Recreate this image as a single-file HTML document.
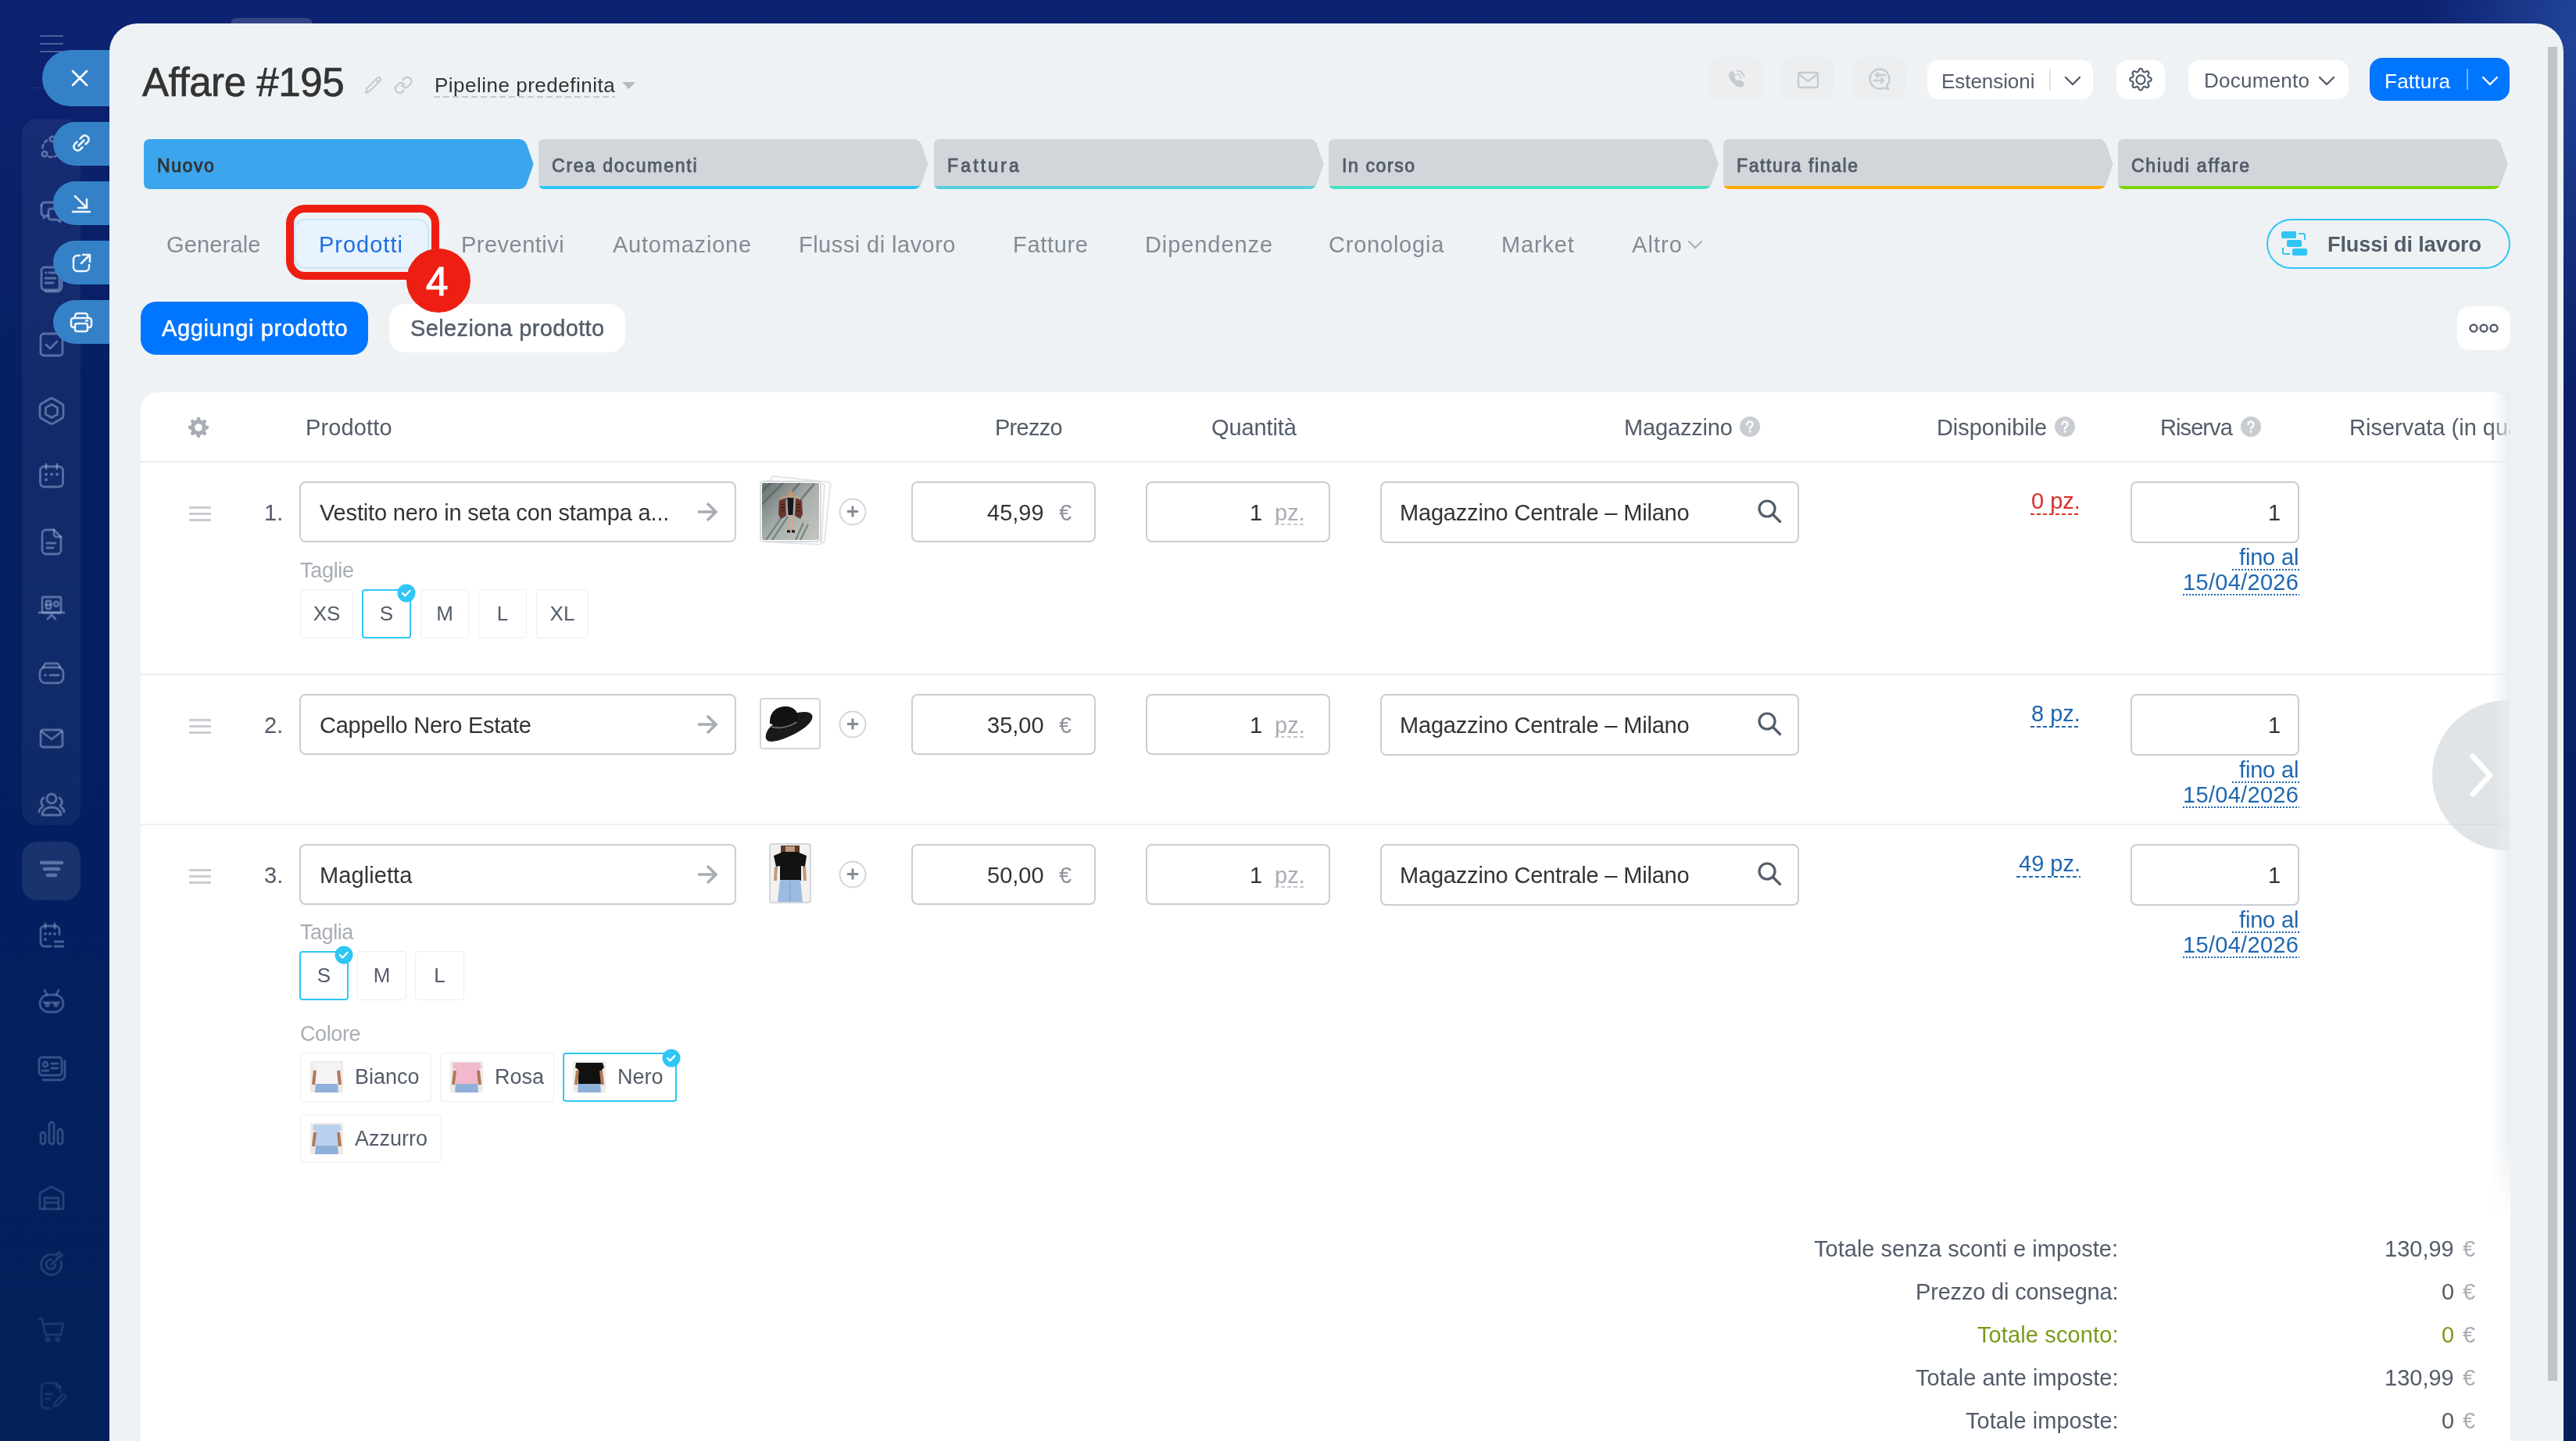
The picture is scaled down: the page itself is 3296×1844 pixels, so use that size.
<!DOCTYPE html>
<html><head><meta charset="utf-8"><style>
html,body{margin:0;padding:0;width:3296px;height:1844px;overflow:hidden;}
body{position:relative;font-family:"Liberation Sans",sans-serif;}
.a{position:absolute;}
.t{white-space:nowrap;will-change:transform;}
</style></head><body>
<div class="a" style="left:0px;top:0px;width:3296px;height:1844px;background:linear-gradient(180deg,#0d2271 0%,#0a2068 25%,#04205c 100%);"></div>
<div class="a" style="left:3100px;top:0px;width:196px;height:500px;background:radial-gradient(ellipse at 100% 10%,rgba(60,110,200,.45),rgba(60,110,200,0) 70%);"></div>
<div class="a" style="left:0px;top:0px;width:140px;height:1844px;background:linear-gradient(180deg,#0d2271 0%,#061f62 30%,#041f60 60%,#03215a 100%);"></div>
<div class="a" style="left:51px;top:45px;width:30px;height:2px;background:rgba(255,255,255,.28);border-radius:1px;"></div>
<div class="a" style="left:51px;top:55px;width:30px;height:2px;background:rgba(255,255,255,.28);border-radius:1px;"></div>
<div class="a" style="left:51px;top:65px;width:30px;height:2px;background:rgba(255,255,255,.28);border-radius:1px;"></div>
<div class="a" style="left:40px;top:112px;width:100px;height:1px;background:rgba(255,255,255,.08);"></div>
<div class="a" style="left:28px;top:152px;width:75px;height:904px;background:rgba(255,255,255,.05);border-radius:20px;"></div>
<div class="a" style="left:28px;top:1077px;width:75px;height:75px;background:rgba(255,255,255,.09);border-radius:20px;"></div>
<div class="a" style="left:295px;top:23px;width:105px;height:11px;background:rgba(255,255,255,.16);border-radius:8px 8px 0 0;"></div>
<svg class="a" style="left:47px;top:170px;" width="38" height="38" viewBox="0 0 38 38"><g fill="none" stroke="rgba(170,185,225,.48)" stroke-width="2.8" stroke-linecap="round" stroke-linejoin="round" opacity="1"><circle cx="20" cy="8" r="3.2"/><circle cx="10" cy="27" r="3.2"/><path d="M13 9.5A13 13 0 0 0 7.5 21" stroke-dasharray="4 3.5"/><path d="M15.5 30.5A13 13 0 0 0 29 26" stroke-dasharray="4 3.5"/></g></svg>
<svg class="a" style="left:47px;top:253px;" width="38" height="38" viewBox="0 0 38 38"><g fill="none" stroke="rgba(170,185,225,.48)" stroke-width="2.8" stroke-linecap="round" stroke-linejoin="round" opacity="1"><path d="M6 10a4 4 0 0 1 4-4h14a4 4 0 0 1 4 4v3"/><path d="M6 10v9a4 4 0 0 0 3 4v3l3-3h2"/><path d="M15 17a3 3 0 0 1 3-3h13a3 3 0 0 1 3 3v8a3 3 0 0 1-3 3h-1v3l-4-3h-8a3 3 0 0 1-3-3z"/></g></svg>
<svg class="a" style="left:47px;top:338px;" width="38" height="38" viewBox="0 0 38 38"><g fill="none" stroke="rgba(170,185,225,.48)" stroke-width="2.8" stroke-linecap="round" stroke-linejoin="round" opacity="1"><rect x="6" y="4" width="23" height="29" rx="4"/><path d="M32 9v20a6 6 0 0 1-6 6H11"/><circle cx="12" cy="11" r="1.6" fill="rgba(170,185,225,.48)" stroke="none"/><path d="M16 11h8M11 18h13M11 24h10"/></g></svg>
<svg class="a" style="left:47px;top:422px;" width="38" height="38" viewBox="0 0 38 38"><g fill="none" stroke="rgba(170,185,225,.48)" stroke-width="2.8" stroke-linecap="round" stroke-linejoin="round" opacity="1"><rect x="5" y="5" width="28" height="28" rx="4"/><path d="M12 19l5 5 9-9"/></g></svg>
<svg class="a" style="left:47px;top:507px;" width="38" height="38" viewBox="0 0 38 38"><g fill="none" stroke="rgba(170,185,225,.48)" stroke-width="2.8" stroke-linecap="round" stroke-linejoin="round" opacity="1"><path d="M16.5 3.5a5 5 0 0 1 5 0l10 5.8a5 5 0 0 1 2.5 4.3v10.8a5 5 0 0 1-2.5 4.3l-10 5.8a5 5 0 0 1-5 0l-10-5.8A5 5 0 0 1 4 24.4V13.6a5 5 0 0 1 2.5-4.3z"/><path d="M19 10.5l7.5 4.3v8.4L19 27.5l-7.5-4.3v-8.4z"/></g></svg>
<svg class="a" style="left:47px;top:590px;" width="38" height="38" viewBox="0 0 38 38"><g fill="none" stroke="rgba(170,185,225,.48)" stroke-width="2.8" stroke-linecap="round" stroke-linejoin="round" opacity="1"><rect x="4.5" y="7" width="29" height="26" rx="5"/><path d="M12 4v6M26 4v6"/><g fill="rgba(170,185,225,.48)" stroke="none"><circle cx="12" cy="17" r="2"/><circle cx="19" cy="17" r="2"/><circle cx="26" cy="17" r="2"/><circle cx="12" cy="24" r="2"/></g></g></svg>
<svg class="a" style="left:47px;top:675px;" width="38" height="38" viewBox="0 0 38 38"><g fill="none" stroke="rgba(170,185,225,.48)" stroke-width="2.8" stroke-linecap="round" stroke-linejoin="round" opacity="1"><path d="M11 3h11l9 9v17a5 5 0 0 1-5 5H12a5 5 0 0 1-5-5V8a5 5 0 0 1 4-5z"/><path d="M22 3v6a3 3 0 0 0 3 3h6M13 20h11M13 26h8"/></g></svg>
<svg class="a" style="left:47px;top:760px;" width="38" height="38" viewBox="0 0 38 38"><g fill="none" stroke="rgba(170,185,225,.48)" stroke-width="2.8" stroke-linecap="round" stroke-linejoin="round" opacity="1"><rect x="7" y="4" width="24" height="20" rx="2"/><path d="M3 24h32M19 27l-5 5M19 27l5 5"/><rect x="12" y="9" width="6" height="10" rx="1"/><path d="M12 14h6"/><circle cx="25" cy="13" r="3"/></g></svg>
<svg class="a" style="left:47px;top:842px;" width="38" height="38" viewBox="0 0 38 38"><g fill="none" stroke="rgba(170,185,225,.48)" stroke-width="2.8" stroke-linecap="round" stroke-linejoin="round" opacity="1"><path d="M8 12l3-5h16l3 5"/><rect x="4" y="12" width="30" height="20" rx="7"/><circle cx="11" cy="22" r="1.8" fill="rgba(170,185,225,.48)" stroke="none"/><path d="M17 22h11"/></g></svg>
<svg class="a" style="left:47px;top:926px;" width="38" height="38" viewBox="0 0 38 38"><g fill="none" stroke="rgba(170,185,225,.48)" stroke-width="2.8" stroke-linecap="round" stroke-linejoin="round" opacity="1"><rect x="5" y="8" width="28" height="22" rx="3"/><path d="M6 10l13 10 13-10"/></g></svg>
<svg class="a" style="left:47px;top:1011px;" width="38" height="38" viewBox="0 0 38 38"><g fill="none" stroke="rgba(170,185,225,.48)" stroke-width="2.8" stroke-linecap="round" stroke-linejoin="round" opacity="1"><circle cx="19" cy="11" r="6"/><path d="M7 32c0-6 5-10 12-10s12 4 12 10z"/><path d="M8 20a6 6 0 0 1 1-10M30 20a6 6 0 0 0-1-10M3 28c0-3 2-5 4-6M35 28c0-3-2-5-4-6"/></g></svg>
<svg class="a" style="left:47px;top:1095px;" width="38" height="38" viewBox="0 0 38 38"><g fill="none" stroke="rgba(170,185,225,.48)" stroke-width="2.8" stroke-linecap="round" stroke-linejoin="round" opacity="1"><path d="M6 9h26M10 17h18M14 25h10" stroke-width="4.5"/></g></svg>
<svg class="a" style="left:47px;top:1179px;" width="38" height="38" viewBox="0 0 38 38"><g fill="none" stroke="rgba(170,185,225,.48)" stroke-width="2.8" stroke-linecap="round" stroke-linejoin="round" opacity="0.85"><path d="M29 17V11a5 5 0 0 0-5-5H10a5 5 0 0 0-5 5v16a5 5 0 0 0 5 5h8"/><path d="M11 3v6M23 3v6"/><g fill="rgba(170,185,225,.48)" stroke="none"><circle cx="11" cy="16" r="2"/><circle cx="17" cy="16" r="2"/><circle cx="23" cy="16" r="2"/><circle cx="11" cy="23" r="2"/></g><path d="M23 26h11M23 32h11"/></g></svg>
<svg class="a" style="left:47px;top:1263px;" width="38" height="38" viewBox="0 0 38 38"><g fill="none" stroke="rgba(170,185,225,.48)" stroke-width="2.8" stroke-linecap="round" stroke-linejoin="round" opacity="0.75"><path d="M10 4l3 6M28 4l-3 6"/><rect x="4" y="10" width="30" height="22" rx="11"/><path d="M9 20h20"/><circle cx="13.5" cy="23" r="1.6"/><circle cx="24.5" cy="23" r="1.6"/></g></svg>
<svg class="a" style="left:47px;top:1347px;" width="38" height="38" viewBox="0 0 38 38"><g fill="none" stroke="rgba(170,185,225,.48)" stroke-width="2.8" stroke-linecap="round" stroke-linejoin="round" opacity="0.68"><rect x="3" y="6" width="29" height="23" rx="4"/><path d="M36 11v18a6 6 0 0 1-6 6H8"/><circle cx="11" cy="15" r="3"/><path d="M7 23h8M19 14h8M19 20h8"/></g></svg>
<svg class="a" style="left:47px;top:1431px;" width="38" height="38" viewBox="0 0 38 38"><g fill="none" stroke="rgba(170,185,225,.48)" stroke-width="2.8" stroke-linecap="round" stroke-linejoin="round" opacity="0.6"><rect x="5" y="18" width="6" height="15" rx="3"/><rect x="16" y="5" width="6" height="28" rx="3"/><rect x="27" y="14" width="6" height="19" rx="3"/></g></svg>
<svg class="a" style="left:47px;top:1515px;" width="38" height="38" viewBox="0 0 38 38"><g fill="none" stroke="rgba(170,185,225,.48)" stroke-width="2.8" stroke-linecap="round" stroke-linejoin="round" opacity="0.45"><path d="M4 14a4 4 0 0 1 2-3.5l11-6a4 4 0 0 1 4 0l11 6a4 4 0 0 1 2 3.5V32H4z"/><path d="M10 32V18h18v14M10 24h18"/></g></svg>
<svg class="a" style="left:47px;top:1599px;" width="38" height="38" viewBox="0 0 38 38"><g fill="none" stroke="rgba(170,185,225,.48)" stroke-width="2.8" stroke-linecap="round" stroke-linejoin="round" opacity="0.4"><path d="M31 15a13 13 0 1 1-8-8"/><path d="M24 19a6 6 0 1 1-5-6"/><path d="M19 19l10-10M26 6l1 3 3 1 3-3-3-1-1-3z"/></g></svg>
<svg class="a" style="left:47px;top:1683px;" width="38" height="38" viewBox="0 0 38 38"><g fill="none" stroke="rgba(170,185,225,.48)" stroke-width="2.8" stroke-linecap="round" stroke-linejoin="round" opacity="0.32"><path d="M3 5h4l4 20h20l3-14H9"/><circle cx="14" cy="31" r="2.2"/><circle cx="27" cy="31" r="2.2"/></g></svg>
<svg class="a" style="left:47px;top:1767px;" width="38" height="38" viewBox="0 0 38 38"><g fill="none" stroke="rgba(170,185,225,.48)" stroke-width="2.8" stroke-linecap="round" stroke-linejoin="round" opacity="0.26"><path d="M30 14V8l-5-5H11a5 5 0 0 0-5 5v22a5 5 0 0 0 5 5h6"/><path d="M25 3v5h5M12 17h8M12 23h5"/><path d="M22 33l2-6 9-9a2.5 2.5 0 0 1 3.5 3.5l-9 9z"/></g></svg>
<div class="a" style="left:54px;top:64px;width:126px;height:72px;background:#3581c8;border-radius:36px;"></div>
<svg class="a" style="left:84px;top:82px;" width="36" height="36" viewBox="0 0 36 36"><path d="M9 9l18 18M27 9L9 27" stroke="#fff" stroke-width="2.6" stroke-linecap="round"/></svg>
<div class="a" style="left:68px;top:156px;width:112px;height:56px;background:#3581c8;border-radius:28px;"></div>
<div class="a" style="left:68px;top:232px;width:112px;height:56px;background:#3581c8;border-radius:28px;"></div>
<div class="a" style="left:68px;top:308px;width:112px;height:56px;background:#3581c8;border-radius:28px;"></div>
<div class="a" style="left:68px;top:384px;width:112px;height:56px;background:#3581c8;border-radius:28px;"></div>
<svg class="a" style="left:86px;top:165px;" width="36" height="36" viewBox="0 0 36 36"><g fill="none" stroke="#f2f6fb" stroke-width="2.5" stroke-linecap="round" stroke-linejoin="round"><path d="M14.5 21.5l7-7"/><path d="M12.5 16.5l-3 3a5 5 0 0 0 7 7l3-3"/><path d="M23.5 19.5l3-3a5 5 0 0 0-7-7l-3 3"/></g></svg>
<svg class="a" style="left:86px;top:242px;" width="36" height="36" viewBox="0 0 36 36"><g fill="none" stroke="#f2f6fb" stroke-width="2.5" stroke-linecap="round" stroke-linejoin="round"><path d="M10 9l15 15M25 13v11H14M7 29h22"/></g></svg>
<svg class="a" style="left:86px;top:318px;" width="36" height="36" viewBox="0 0 36 36"><g fill="none" stroke="#f2f6fb" stroke-width="2.5" stroke-linecap="round" stroke-linejoin="round"><path d="M16 9h-3a5 5 0 0 0-5 5v10a5 5 0 0 0 5 5h10a5 5 0 0 0 5-5v-3"/><path d="M20 8h9v9M29 8l-11 11"/></g></svg>
<svg class="a" style="left:86px;top:394px;" width="36" height="36" viewBox="0 0 36 36"><g fill="none" stroke="#f2f6fb" stroke-width="2.5" stroke-linecap="round" stroke-linejoin="round"><path d="M10 13V10a3 3 0 0 1 3-3h10a3 3 0 0 1 3 3v3"/><path d="M10 25H8a3 3 0 0 1-3-3v-6a3 3 0 0 1 3-3h20a3 3 0 0 1 3 3v6a3 3 0 0 1-3 3h-2"/><rect x="10" y="20" width="16" height="10" rx="2.5"/><path d="M24 16.5h2"/></g></svg>
<div class="a" style="left:140px;top:30px;width:3140px;height:1870px;background:#eef2f4;border-radius:36px 36px 0 0;"></div>
<div class="a" style="left:3260px;top:60px;width:12px;height:1707px;background:#c1c4c6;"></div>
<div class="a t" style="left:181.5px;top:79.7px;font-size:51px;line-height:51px;color:#333;font-weight:400;letter-spacing:-0.42px;-webkit-text-stroke:0.7px #333;">Affare #195</div>
<svg class="a" style="left:464px;top:95px;" width="28" height="28" viewBox="0 0 28 28"><g fill="none" stroke="#c4c9ce" stroke-width="2" stroke-linejoin="round"><path d="M4 24l1.5-6L19 4.5a2.5 2.5 0 0 1 3.5 3.5L9 21.5z"/><path d="M17 7l4 4"/></g></svg>
<svg class="a" style="left:503px;top:94px;" width="30" height="30" viewBox="0 0 30 30"><g fill="none" stroke="#c4c9ce" stroke-width="2.2" stroke-linecap="round"><path d="M14.5 14.5l-1.3-1.3a4.3 4.3 0 0 0-6.1 0l-3.2 3.2a4.3 4.3 0 0 0 0 6.1l1.2 1.2a4.3 4.3 0 0 0 6.1 0l2.2-2.2"/><path d="M11.3 15.5l1.3 1.3a4.3 4.3 0 0 0 6.1 0l3.6-3.6a4.3 4.3 0 0 0 0-6.1l-1.2-1.2a4.3 4.3 0 0 0-6.1 0l-2 2"/></g></svg>
<div class="a t" style="left:556.0px;top:96.3px;font-size:26px;line-height:26px;color:#333;font-weight:400;letter-spacing:0.50px;">Pipeline predefinita</div>
<div class="a" style="left:555px;top:123px;width:232px;height:2px;background:repeating-linear-gradient(90deg,#c4c9ce 0 8px,transparent 8px 12px);"></div>
<svg class="a" style="left:796px;top:105px;" width="17" height="10" viewBox="0 0 17 10"><path d="M0 0h17L8.5 9z" fill="#b5bac0"/></svg>
<div class="a" style="left:2187px;top:74px;width:67px;height:54px;background:#eceef0;border-radius:14px;box-shadow:0 0 2px rgba(0,0,0,.03);"></div>
<div class="a" style="left:2279px;top:74px;width:67px;height:54px;background:#eceef0;border-radius:14px;box-shadow:0 0 2px rgba(0,0,0,.03);"></div>
<div class="a" style="left:2372px;top:74px;width:66px;height:54px;background:#eceef0;border-radius:14px;box-shadow:0 0 2px rgba(0,0,0,.03);"></div>
<svg class="a" style="left:2204px;top:84px;" width="34" height="34" viewBox="0 0 34 34"><g fill="none" stroke="#c6cbd0" stroke-width="2.4" stroke-linecap="round" stroke-linejoin="round"><path d="M10 9c1.5-1.5 3-1 4 .5l1.5 2.5c.8 1.5 0 2.5-1 3.3 1 2.5 2.8 4.3 5.2 5.3 1-1 2-1.7 3.3-1l2.5 1.5c1.5 1 2 2.5.5 4-2.5 2.5-7 1.8-12-3.2S7.5 11.5 10 9z" fill="#c6cbd0" stroke-width="1.6"/><path d="M19 6.5a9 9 0 0 1 8.5 8.5" stroke-width="1.8" stroke-dasharray="9 2 4"/><path d="M18.5 11a4.5 4.5 0 0 1 4.5 4.5" stroke-width="1.8"/></g></svg>
<svg class="a" style="left:2296px;top:84px;" width="34" height="34" viewBox="0 0 34 34"><g fill="none" stroke="#c6cbd0" stroke-width="2.4" stroke-linecap="round" stroke-linejoin="round"><rect x="5" y="9" width="25" height="19" rx="2"/><path d="M6 11l11.5 9L29 11"/></g></svg>
<svg class="a" style="left:2388px;top:84px;" width="34" height="34" viewBox="0 0 34 34"><g fill="none" stroke="#c6cbd0" stroke-width="2.4" stroke-linecap="round" stroke-linejoin="round"><path d="M17 4.5a12.5 12.5 0 1 0 5.5 23.8l5.5 1.7-1.7-4.8A12.5 12.5 0 0 0 17 4.5z"/><path d="M24 12H12M15 9l-3 3 3 3M10 19h12M19 16l3 3-3 3"/></g></svg>
<div class="a" style="left:2466px;top:77px;width:212px;height:50px;background:#fff;border-radius:14px;"></div>
<div class="a t" style="left:2484.0px;top:91.1px;font-size:26px;line-height:26px;color:#535c69;font-weight:400;letter-spacing:-0.06px;">Estensioni</div>
<div class="a" style="left:2622px;top:88px;width:2px;height:28px;background:#e3e5e8;"></div>
<svg class="a" style="left:2640px;top:96px;" width="24" height="14" viewBox="0 0 24 14"><path d="M3 3l9 9 9-9" fill="none" stroke="#535c69" stroke-width="2.4" stroke-linecap="round" stroke-linejoin="round"/></svg>
<div class="a" style="left:2708px;top:77px;width:62px;height:50px;background:#fff;border-radius:14px;"></div>
<svg class="a" style="left:2721px;top:84px;" width="36" height="36" viewBox="0 0 36 36"><g fill="none" stroke="#535c69" stroke-width="2.2" stroke-linejoin="round"><path d="M18.00 3.90L18.36 3.92L18.71 3.97L19.06 4.08L19.40 4.26L19.72 4.55L20.00 4.97L20.24 5.53L20.44 6.14L20.62 6.69L20.81 7.13L21.01 7.45L21.23 7.67L21.46 7.84L21.70 7.97L21.94 8.08L22.19 8.18L22.46 8.25L22.74 8.30L23.05 8.29L23.42 8.21L23.86 8.04L24.38 7.77L24.95 7.48L25.51 7.26L26.01 7.16L26.44 7.18L26.81 7.29L27.13 7.46L27.42 7.67L27.69 7.91L27.93 8.18L28.14 8.47L28.31 8.79L28.42 9.16L28.44 9.59L28.34 10.09L28.12 10.65L27.83 11.22L27.56 11.74L27.39 12.18L27.31 12.55L27.30 12.86L27.35 13.14L27.42 13.41L27.52 13.66L27.63 13.90L27.76 14.14L27.93 14.37L28.15 14.59L28.47 14.79L28.91 14.98L29.46 15.16L30.07 15.36L30.63 15.60L31.05 15.88L31.34 16.20L31.52 16.54L31.63 16.89L31.68 17.24L31.70 17.60L31.68 17.96L31.63 18.31L31.52 18.66L31.34 19.00L31.05 19.32L30.63 19.60L30.07 19.84L29.46 20.04L28.91 20.22L28.47 20.41L28.15 20.61L27.93 20.83L27.76 21.06L27.63 21.30L27.52 21.54L27.42 21.79L27.35 22.06L27.30 22.34L27.31 22.65L27.39 23.02L27.56 23.46L27.83 23.98L28.12 24.55L28.34 25.11L28.44 25.61L28.42 26.04L28.31 26.41L28.14 26.73L27.93 27.02L27.69 27.29L27.42 27.53L27.13 27.74L26.81 27.91L26.44 28.02L26.01 28.04L25.51 27.94L24.95 27.72L24.38 27.43L23.86 27.16L23.42 26.99L23.05 26.91L22.74 26.90L22.46 26.95L22.19 27.02L21.94 27.12L21.70 27.23L21.46 27.36L21.23 27.53L21.01 27.75L20.81 28.07L20.62 28.51L20.44 29.06L20.24 29.67L20.00 30.23L19.72 30.65L19.40 30.94L19.06 31.12L18.71 31.23L18.36 31.28L18.00 31.30L17.64 31.28L17.29 31.23L16.94 31.12L16.60 30.94L16.28 30.65L16.00 30.23L15.76 29.67L15.56 29.06L15.38 28.51L15.19 28.07L14.99 27.75L14.77 27.53L14.54 27.36L14.30 27.23L14.06 27.12L13.81 27.02L13.54 26.95L13.26 26.90L12.95 26.91L12.58 26.99L12.14 27.16L11.62 27.43L11.05 27.72L10.49 27.94L9.99 28.04L9.56 28.02L9.19 27.91L8.87 27.74L8.58 27.53L8.31 27.29L8.07 27.02L7.86 26.73L7.69 26.41L7.58 26.04L7.56 25.61L7.66 25.11L7.88 24.55L8.17 23.98L8.44 23.46L8.61 23.02L8.69 22.65L8.70 22.34L8.65 22.06L8.58 21.79L8.48 21.54L8.37 21.30L8.24 21.06L8.07 20.83L7.85 20.61L7.53 20.41L7.09 20.22L6.54 20.04L5.93 19.84L5.37 19.60L4.95 19.32L4.66 19.00L4.48 18.66L4.37 18.31L4.32 17.96L4.30 17.60L4.32 17.24L4.37 16.89L4.48 16.54L4.66 16.20L4.95 15.88L5.37 15.60L5.93 15.36L6.54 15.16L7.09 14.98L7.53 14.79L7.85 14.59L8.07 14.37L8.24 14.14L8.37 13.90L8.48 13.66L8.58 13.41L8.65 13.14L8.70 12.86L8.69 12.55L8.61 12.18L8.44 11.74L8.17 11.22L7.88 10.65L7.66 10.09L7.56 9.59L7.58 9.16L7.69 8.79L7.86 8.47L8.07 8.18L8.31 7.91L8.58 7.67L8.87 7.46L9.19 7.29L9.56 7.18L9.99 7.16L10.49 7.26L11.05 7.48L11.62 7.77L12.14 8.04L12.58 8.21L12.95 8.29L13.26 8.30L13.54 8.25L13.81 8.18L14.06 8.08L14.30 7.97L14.54 7.84L14.77 7.67L14.99 7.45L15.19 7.13L15.38 6.69L15.56 6.14L15.76 5.53L16.00 4.97L16.28 4.55L16.60 4.26L16.94 4.08L17.29 3.97L17.64 3.92Z"/><circle cx="18" cy="18" r="5.6"/></g></svg>
<div class="a" style="left:2800px;top:77px;width:205px;height:50px;background:#fff;border-radius:14px;"></div>
<div class="a t" style="left:2819.6px;top:89.9px;font-size:26px;line-height:26px;color:#535c69;font-weight:400;letter-spacing:0.25px;">Documento</div>
<svg class="a" style="left:2965px;top:96px;" width="24" height="14" viewBox="0 0 24 14"><path d="M3 3l9 9 9-9" fill="none" stroke="#535c69" stroke-width="2.4" stroke-linecap="round" stroke-linejoin="round"/></svg>
<div class="a" style="left:3032px;top:74px;width:179px;height:55px;background:#0075ff;border-radius:16px;"></div>
<div class="a t" style="left:3051.0px;top:90.9px;font-size:26px;line-height:26px;color:#fff;font-weight:400;letter-spacing:0.25px;">Fattura</div>
<div class="a" style="left:3156px;top:88px;width:2px;height:27px;background:rgba(255,255,255,.45);"></div>
<svg class="a" style="left:3174px;top:96px;" width="24" height="14" viewBox="0 0 24 14"><path d="M3 3l9 9 9-9" fill="none" stroke="#fff" stroke-width="2.4" stroke-linecap="round" stroke-linejoin="round"/></svg>
<svg class="a" style="left:184px;top:178px;" width="499" height="64" viewBox="0 0 499 64"><defs><clipPath id="sc0"><path d="M8 0H480Q487 0 490 7L498 30Q499 32 498 34L490 57Q487 64 480 64H8Q0 64 0 56V8Q0 0 8 0Z"/></clipPath></defs><path d="M8 0H480Q487 0 490 7L498 30Q499 32 498 34L490 57Q487 64 480 64H8Q0 64 0 56V8Q0 0 8 0Z" fill="#3ba6ee"/></svg>
<div class="a t" style="left:201.0px;top:200.8px;font-size:23px;line-height:23px;color:#333;font-weight:400;letter-spacing:1.57px;-webkit-text-stroke:0.9px #333;">Nuovo</div>
<svg class="a" style="left:689px;top:178px;" width="499" height="64" viewBox="0 0 499 64"><defs><clipPath id="sc1"><path d="M8 0H480Q487 0 490 7L498 30Q499 32 498 34L490 57Q487 64 480 64H8Q0 64 0 56V8Q0 0 8 0Z"/></clipPath></defs><path d="M8 0H480Q487 0 490 7L498 30Q499 32 498 34L490 57Q487 64 480 64H8Q0 64 0 56V8Q0 0 8 0Z" fill="#d2d6db"/><rect x="0" y="60" width="499" height="4" fill="#2fc6f6" clip-path="url(#sc1)"/></svg>
<div class="a t" style="left:706.0px;top:200.8px;font-size:23px;line-height:23px;color:#535c69;font-weight:400;letter-spacing:1.79px;-webkit-text-stroke:0.9px #535c69;">Crea documenti</div>
<svg class="a" style="left:1195px;top:178px;" width="499" height="64" viewBox="0 0 499 64"><defs><clipPath id="sc2"><path d="M8 0H480Q487 0 490 7L498 30Q499 32 498 34L490 57Q487 64 480 64H8Q0 64 0 56V8Q0 0 8 0Z"/></clipPath></defs><path d="M8 0H480Q487 0 490 7L498 30Q499 32 498 34L490 57Q487 64 480 64H8Q0 64 0 56V8Q0 0 8 0Z" fill="#d2d6db"/><rect x="0" y="60" width="499" height="4" fill="#55d0e0" clip-path="url(#sc2)"/></svg>
<div class="a t" style="left:1212.0px;top:200.8px;font-size:23px;line-height:23px;color:#535c69;font-weight:400;letter-spacing:3.17px;-webkit-text-stroke:0.9px #535c69;">Fattura</div>
<svg class="a" style="left:1700px;top:178px;" width="499" height="64" viewBox="0 0 499 64"><defs><clipPath id="sc3"><path d="M8 0H480Q487 0 490 7L498 30Q499 32 498 34L490 57Q487 64 480 64H8Q0 64 0 56V8Q0 0 8 0Z"/></clipPath></defs><path d="M8 0H480Q487 0 490 7L498 30Q499 32 498 34L490 57Q487 64 480 64H8Q0 64 0 56V8Q0 0 8 0Z" fill="#d2d6db"/><rect x="0" y="60" width="499" height="4" fill="#47dfbf" clip-path="url(#sc3)"/></svg>
<div class="a t" style="left:1717.0px;top:200.8px;font-size:23px;line-height:23px;color:#535c69;font-weight:400;letter-spacing:1.61px;-webkit-text-stroke:0.9px #535c69;">In corso</div>
<svg class="a" style="left:2205px;top:178px;" width="499" height="64" viewBox="0 0 499 64"><defs><clipPath id="sc4"><path d="M8 0H480Q487 0 490 7L498 30Q499 32 498 34L490 57Q487 64 480 64H8Q0 64 0 56V8Q0 0 8 0Z"/></clipPath></defs><path d="M8 0H480Q487 0 490 7L498 30Q499 32 498 34L490 57Q487 64 480 64H8Q0 64 0 56V8Q0 0 8 0Z" fill="#d2d6db"/><rect x="0" y="60" width="499" height="4" fill="#ffa900" clip-path="url(#sc4)"/></svg>
<div class="a t" style="left:2222.0px;top:200.8px;font-size:23px;line-height:23px;color:#535c69;font-weight:400;letter-spacing:1.60px;-webkit-text-stroke:0.9px #535c69;">Fattura finale</div>
<svg class="a" style="left:2710px;top:178px;" width="499" height="64" viewBox="0 0 499 64"><defs><clipPath id="sc5"><path d="M8 0H480Q487 0 490 7L498 30Q499 32 498 34L490 57Q487 64 480 64H8Q0 64 0 56V8Q0 0 8 0Z"/></clipPath></defs><path d="M8 0H480Q487 0 490 7L498 30Q499 32 498 34L490 57Q487 64 480 64H8Q0 64 0 56V8Q0 0 8 0Z" fill="#d2d6db"/><rect x="0" y="60" width="499" height="4" fill="#7bd500" clip-path="url(#sc5)"/></svg>
<div class="a t" style="left:2727.0px;top:200.8px;font-size:23px;line-height:23px;color:#535c69;font-weight:400;letter-spacing:1.75px;-webkit-text-stroke:0.9px #535c69;">Chiudi affare</div>
<div class="a" style="left:376px;top:280px;width:173px;height:64px;background:#e8f3fd;border:2px solid #cde3f7;border-radius:14px;box-sizing:border-box;"></div>
<div class="a t" style="left:213.0px;top:299.4px;font-size:29px;line-height:29px;color:#828b95;font-weight:400;letter-spacing:0.16px;">Generale</div>
<div class="a t" style="left:408.0px;top:299.4px;font-size:29px;line-height:29px;color:#1f6fe0;font-weight:400;letter-spacing:0.99px;">Prodotti</div>
<div class="a t" style="left:590.0px;top:299.4px;font-size:29px;line-height:29px;color:#828b95;font-weight:400;letter-spacing:0.49px;">Preventivi</div>
<div class="a t" style="left:784.0px;top:299.4px;font-size:29px;line-height:29px;color:#828b95;font-weight:400;letter-spacing:0.78px;">Automazione</div>
<div class="a t" style="left:1022.0px;top:299.4px;font-size:29px;line-height:29px;color:#828b95;font-weight:400;letter-spacing:0.47px;">Flussi di lavoro</div>
<div class="a t" style="left:1296.0px;top:299.4px;font-size:29px;line-height:29px;color:#828b95;font-weight:400;letter-spacing:0.67px;">Fatture</div>
<div class="a t" style="left:1465.0px;top:299.4px;font-size:29px;line-height:29px;color:#828b95;font-weight:400;letter-spacing:0.92px;">Dipendenze</div>
<div class="a t" style="left:1700.0px;top:299.4px;font-size:29px;line-height:29px;color:#828b95;font-weight:400;letter-spacing:0.78px;">Cronologia</div>
<div class="a t" style="left:1921.0px;top:299.4px;font-size:29px;line-height:29px;color:#828b95;font-weight:400;letter-spacing:0.85px;">Market</div>
<div class="a t" style="left:2088.0px;top:299.4px;font-size:29px;line-height:29px;color:#828b95;font-weight:400;letter-spacing:1.06px;">Altro</div>
<svg class="a" style="left:2158px;top:306px;" width="22" height="14" viewBox="0 0 22 14"><path d="M3 3l8 8 8-8" fill="none" stroke="#a8adb4" stroke-width="2" stroke-linecap="round"/></svg>
<div class="a" style="left:2900px;top:280px;width:312px;height:64px;border:2px solid #2fc6f6;border-radius:32px;box-sizing:border-box;"></div>
<svg class="a" style="left:2918px;top:295px;" width="36" height="34" viewBox="0 0 36 34"><g fill="#2fc6f6"><rect x="1" y="1" width="19" height="9" rx="2"/><rect x="8" y="12" width="19" height="9" rx="2"/><rect x="15" y="23" width="19" height="9" rx="2"/></g><g fill="none" stroke="#2fc6f6" stroke-width="2"><path d="M23 4h6a2 2 0 0 1 2 2v6M12 30H5a2 2 0 0 1-2-2v-6"/></g></svg>
<div class="a t" style="left:2978.0px;top:299.7px;font-size:27px;line-height:27px;color:#535c69;font-weight:700;letter-spacing:-0.07px;">Flussi di lavoro</div>
<div class="a" style="left:180px;top:386px;width:291px;height:68px;background:#0075ff;border-radius:20px;"></div>
<div class="a t" style="left:207.0px;top:405.7px;font-size:29px;line-height:29px;color:#fff;font-weight:400;letter-spacing:0.64px;-webkit-text-stroke:0.5px #fff;">Aggiungi prodotto</div>
<div class="a" style="left:498px;top:389px;width:302px;height:62px;background:#fff;border-radius:20px;"></div>
<div class="a t" style="left:525.0px;top:405.7px;font-size:29px;line-height:29px;color:#535c69;font-weight:400;letter-spacing:0.37px;-webkit-text-stroke:0.4px #535c69;">Seleziona prodotto</div>
<div class="a" style="left:3144px;top:392px;width:68px;height:56px;background:#fff;border-radius:16px;"></div>
<svg class="a" style="left:3154px;top:410px;" width="48" height="20" viewBox="0 0 48 20"><g fill="none" stroke="#535c69" stroke-width="2.4"><circle cx="11" cy="10" r="4.5"/><circle cx="24" cy="10" r="4.5"/><circle cx="37" cy="10" r="4.5"/></g></svg>
<div class="a" style="left:366px;top:262px;width:196px;height:96px;border:10px solid #ee1f12;border-radius:24px;box-sizing:border-box;"></div>
<div class="a" style="left:520px;top:318px;width:82px;height:82px;background:#ee1f12;border-radius:50%;"></div>
<div class="a t" style="left:545px;top:335.4px;font-size:51px;line-height:51px;color:#fff;font-weight:400;-webkit-text-stroke:1.2px #fff;">4</div>
<div class="a" style="left:180px;top:502px;width:3032px;height:1398px;background:#fff;border-radius:22px 22px 0 0;"></div>
<svg class="a" style="left:239px;top:532px;" width="30" height="30" viewBox="0 0 30 30"><g fill="#a8adb4"><rect x="12.6" y="1.8" width="4.8" height="9" rx="2.4" transform="rotate(0 15 15)"/><rect x="12.6" y="1.8" width="4.8" height="9" rx="2.4" transform="rotate(45 15 15)"/><rect x="12.6" y="1.8" width="4.8" height="9" rx="2.4" transform="rotate(90 15 15)"/><rect x="12.6" y="1.8" width="4.8" height="9" rx="2.4" transform="rotate(135 15 15)"/><rect x="12.6" y="1.8" width="4.8" height="9" rx="2.4" transform="rotate(180 15 15)"/><rect x="12.6" y="1.8" width="4.8" height="9" rx="2.4" transform="rotate(225 15 15)"/><rect x="12.6" y="1.8" width="4.8" height="9" rx="2.4" transform="rotate(270 15 15)"/><rect x="12.6" y="1.8" width="4.8" height="9" rx="2.4" transform="rotate(315 15 15)"/><circle cx="15" cy="15" r="10"/></g><circle cx="15" cy="15" r="4.8" fill="#fff"/></svg>
<div class="a t" style="left:391.0px;top:533.1px;font-size:29px;line-height:29px;color:#535c69;font-weight:400;letter-spacing:0.14px;">Prodotto</div>
<div class="a t" style="left:1272.7px;top:533.1px;font-size:29px;line-height:29px;color:#535c69;font-weight:400;letter-spacing:-0.75px;">Prezzo</div>
<div class="a t" style="left:1550.0px;top:533.1px;font-size:29px;line-height:29px;color:#535c69;font-weight:400;letter-spacing:-0.11px;">Quantità</div>
<div class="a t" style="left:2078.0px;top:533.1px;font-size:29px;line-height:29px;color:#535c69;font-weight:400;letter-spacing:-0.16px;">Magazzino</div>
<div class="a t" style="left:2478.0px;top:533.1px;font-size:29px;line-height:29px;color:#535c69;font-weight:400;letter-spacing:-0.07px;">Disponibile</div>
<div class="a t" style="left:2764.0px;top:533.1px;font-size:29px;line-height:29px;color:#535c69;font-weight:400;letter-spacing:-0.92px;">Riserva</div>
<div class="a" style="left:3006px;top:0;width:206px;height:1844px;overflow:hidden;pointer-events:none">
<div class="a t" style="left:0px;top:533.1px;font-size:29px;line-height:29px;color:#535c69;font-weight:400;white-space:nowrap;">Riservata (in quantità)</div>
</div>
<svg class="a" style="left:2226px;top:533px;" width="26" height="26" viewBox="0 0 26 26"><circle cx="13" cy="13" r="13" fill="#c9cdd2"/><path d="M9.5 10a3.5 3.5 0 1 1 5.5 2.8c-1.2.8-2 1.4-2 2.7" fill="none" stroke="#fff" stroke-width="2.4" stroke-linecap="round"/><circle cx="13" cy="19.3" r="1.5" fill="#fff"/></svg>
<svg class="a" style="left:2629px;top:533px;" width="26" height="26" viewBox="0 0 26 26"><circle cx="13" cy="13" r="13" fill="#c9cdd2"/><path d="M9.5 10a3.5 3.5 0 1 1 5.5 2.8c-1.2.8-2 1.4-2 2.7" fill="none" stroke="#fff" stroke-width="2.4" stroke-linecap="round"/><circle cx="13" cy="19.3" r="1.5" fill="#fff"/></svg>
<svg class="a" style="left:2867px;top:533px;" width="26" height="26" viewBox="0 0 26 26"><circle cx="13" cy="13" r="13" fill="#c9cdd2"/><path d="M9.5 10a3.5 3.5 0 1 1 5.5 2.8c-1.2.8-2 1.4-2 2.7" fill="none" stroke="#fff" stroke-width="2.4" stroke-linecap="round"/><circle cx="13" cy="19.3" r="1.5" fill="#fff"/></svg>
<div class="a" style="left:180px;top:590px;width:3032px;height:2px;background:#eceef0;"></div>
<div class="a" style="left:242px;top:648.0px;width:28px;height:3.0px;background:#c9cdd2;"></div>
<div class="a" style="left:242px;top:656.0px;width:28px;height:3.0px;background:#c9cdd2;"></div>
<div class="a" style="left:242px;top:664.0px;width:28px;height:3.0px;background:#c9cdd2;"></div>
<div class="a t" style="right:2934px;top:641.8px;font-size:29px;line-height:29px;color:#535c69;font-weight:400;">1.</div>
<div class="a" style="left:383px;top:615.5px;width:559px;height:78.0px;border:2px solid #c9cdd2;border-radius:8px;box-sizing:border-box;background:#fff;"></div>
<div class="a t" style="left:408.5px;top:641.8px;font-size:29px;line-height:29px;color:#333;font-weight:400;letter-spacing:-0.16px;">Vestito nero in seta con stampa a...</div>
<svg class="a" style="left:890px;top:638.5px;" width="32" height="32" viewBox="0 0 32 32"><g fill="none" stroke="#a8adb4" stroke-width="3.6" stroke-linecap="butt" stroke-linejoin="miter"><path d="M3 16h23M15 5l11 11-11 11"/></g></svg>
<svg class="a" style="left:1073px;top:636.5px;" width="36" height="36" viewBox="0 0 36 36"><circle cx="18" cy="18" r="16.5" fill="#fff" stroke="#d2d6db" stroke-width="2"/><path d="M18 10.5v14M11 17.5h14" stroke="#838b95" stroke-width="3"/></svg>
<div class="a" style="left:1166px;top:615.5px;width:236px;height:78.0px;border:2px solid #c9cdd2;border-radius:8px;box-sizing:border-box;background:#fff;"></div>
<div class="a t" style="right:1960px;top:641.8px;font-size:29px;line-height:29px;color:#333;font-weight:400;">45,99</div>
<div class="a t" style="right:1925px;top:641.8px;font-size:29px;line-height:29px;color:#8a9099;font-weight:400;">€</div>
<div class="a" style="left:1466px;top:615.5px;width:236px;height:78.0px;border:2px solid #c9cdd2;border-radius:8px;box-sizing:border-box;background:#fff;"></div>
<div class="a t" style="right:1681px;top:641.8px;font-size:29px;line-height:29px;color:#333;font-weight:400;">1</div>
<div class="a t" style="left:1631px;top:641.8px;font-size:29px;line-height:29px;color:#a8adb4;font-weight:400;">pz.</div>
<div class="a" style="left:1631px;top:669.5px;width:40px;height:2.0px;background:repeating-linear-gradient(90deg,#c4c9ce 0 5px,transparent 5px 8px);"></div>
<div class="a" style="left:1766px;top:615.5px;width:536px;height:79.0px;border:2px solid #c9cdd2;border-radius:8px;box-sizing:border-box;background:#fff;"></div>
<div class="a t" style="left:1791.0px;top:641.8px;font-size:29px;line-height:29px;color:#333;font-weight:400;letter-spacing:-0.19px;">Magazzino Centrale – Milano</div>
<svg class="a" style="left:2246px;top:635.5px;" width="38" height="38" viewBox="0 0 38 38"><g fill="none" stroke="#535c69" stroke-width="3.2" stroke-linecap="round"><circle cx="15" cy="15" r="10"/><path d="M22.5 22.5l9 9"/></g></svg>
<div class="a t" style="right:634px;top:626.6px;font-size:29px;line-height:29px;color:#d9302b;font-weight:400;">0 pz.</div>
<div class="a" style="left:2598px;top:656.5px;width:64px;height:2.0px;background:repeating-linear-gradient(90deg,#d9302b 0 5px,transparent 5px 8px);"></div>
<div class="a" style="left:2726px;top:615.5px;width:216px;height:79.0px;border:2px solid #c9cdd2;border-radius:8px;box-sizing:border-box;background:#fff;"></div>
<div class="a t" style="right:378px;top:641.8px;font-size:29px;line-height:29px;color:#333;font-weight:400;">1</div>
<div class="a t" style="left:2864.5px;top:698.6px;font-size:29px;line-height:29px;color:#2067b0;font-weight:400;letter-spacing:-0.17px;">fino al</div>
<div class="a" style="left:2856px;top:727.5px;width:86px;height:2.0px;background:repeating-linear-gradient(90deg,#2067b0 0 2px,transparent 2px 4px);"></div>
<div class="a t" style="left:2793.0px;top:731.1px;font-size:29px;line-height:29px;color:#2067b0;font-weight:400;letter-spacing:0.31px;">15/04/2026</div>
<div class="a" style="left:2793px;top:760.0px;width:149px;height:2.0px;background:repeating-linear-gradient(90deg,#2067b0 0 2px,transparent 2px 4px);"></div>
<div class="a" style="left:242px;top:920.0px;width:28px;height:3.0px;background:#c9cdd2;"></div>
<div class="a" style="left:242px;top:928.0px;width:28px;height:3.0px;background:#c9cdd2;"></div>
<div class="a" style="left:242px;top:936.0px;width:28px;height:3.0px;background:#c9cdd2;"></div>
<div class="a t" style="right:2934px;top:913.8px;font-size:29px;line-height:29px;color:#535c69;font-weight:400;">2.</div>
<div class="a" style="left:383px;top:887.5px;width:559px;height:78.0px;border:2px solid #c9cdd2;border-radius:8px;box-sizing:border-box;background:#fff;"></div>
<div class="a t" style="left:408.5px;top:913.8px;font-size:29px;line-height:29px;color:#333;font-weight:400;letter-spacing:-0.25px;">Cappello Nero Estate</div>
<svg class="a" style="left:890px;top:910.5px;" width="32" height="32" viewBox="0 0 32 32"><g fill="none" stroke="#a8adb4" stroke-width="3.6" stroke-linecap="butt" stroke-linejoin="miter"><path d="M3 16h23M15 5l11 11-11 11"/></g></svg>
<svg class="a" style="left:1073px;top:908.5px;" width="36" height="36" viewBox="0 0 36 36"><circle cx="18" cy="18" r="16.5" fill="#fff" stroke="#d2d6db" stroke-width="2"/><path d="M18 10.5v14M11 17.5h14" stroke="#838b95" stroke-width="3"/></svg>
<div class="a" style="left:1166px;top:887.5px;width:236px;height:78.0px;border:2px solid #c9cdd2;border-radius:8px;box-sizing:border-box;background:#fff;"></div>
<div class="a t" style="right:1960px;top:913.8px;font-size:29px;line-height:29px;color:#333;font-weight:400;">35,00</div>
<div class="a t" style="right:1925px;top:913.8px;font-size:29px;line-height:29px;color:#8a9099;font-weight:400;">€</div>
<div class="a" style="left:1466px;top:887.5px;width:236px;height:78.0px;border:2px solid #c9cdd2;border-radius:8px;box-sizing:border-box;background:#fff;"></div>
<div class="a t" style="right:1681px;top:913.8px;font-size:29px;line-height:29px;color:#333;font-weight:400;">1</div>
<div class="a t" style="left:1631px;top:913.8px;font-size:29px;line-height:29px;color:#a8adb4;font-weight:400;">pz.</div>
<div class="a" style="left:1631px;top:941.5px;width:40px;height:2.0px;background:repeating-linear-gradient(90deg,#c4c9ce 0 5px,transparent 5px 8px);"></div>
<div class="a" style="left:1766px;top:887.5px;width:536px;height:79.0px;border:2px solid #c9cdd2;border-radius:8px;box-sizing:border-box;background:#fff;"></div>
<div class="a t" style="left:1791.0px;top:913.8px;font-size:29px;line-height:29px;color:#333;font-weight:400;letter-spacing:-0.19px;">Magazzino Centrale – Milano</div>
<svg class="a" style="left:2246px;top:907.5px;" width="38" height="38" viewBox="0 0 38 38"><g fill="none" stroke="#535c69" stroke-width="3.2" stroke-linecap="round"><circle cx="15" cy="15" r="10"/><path d="M22.5 22.5l9 9"/></g></svg>
<div class="a t" style="right:634px;top:898.6px;font-size:29px;line-height:29px;color:#2067b0;font-weight:400;">8 pz.</div>
<div class="a" style="left:2598px;top:928.5px;width:64px;height:2.0px;background:repeating-linear-gradient(90deg,#2067b0 0 5px,transparent 5px 8px);"></div>
<div class="a" style="left:2726px;top:887.5px;width:216px;height:79.0px;border:2px solid #c9cdd2;border-radius:8px;box-sizing:border-box;background:#fff;"></div>
<div class="a t" style="right:378px;top:913.8px;font-size:29px;line-height:29px;color:#333;font-weight:400;">1</div>
<div class="a t" style="left:2864.5px;top:970.6px;font-size:29px;line-height:29px;color:#2067b0;font-weight:400;letter-spacing:-0.17px;">fino al</div>
<div class="a" style="left:2856px;top:999.5px;width:86px;height:2.0px;background:repeating-linear-gradient(90deg,#2067b0 0 2px,transparent 2px 4px);"></div>
<div class="a t" style="left:2793.0px;top:1003.1px;font-size:29px;line-height:29px;color:#2067b0;font-weight:400;letter-spacing:0.31px;">15/04/2026</div>
<div class="a" style="left:2793px;top:1032.0px;width:149px;height:2.0px;background:repeating-linear-gradient(90deg,#2067b0 0 2px,transparent 2px 4px);"></div>
<div class="a" style="left:242px;top:1112.0px;width:28px;height:3.0px;background:#c9cdd2;"></div>
<div class="a" style="left:242px;top:1120.0px;width:28px;height:3.0px;background:#c9cdd2;"></div>
<div class="a" style="left:242px;top:1128.0px;width:28px;height:3.0px;background:#c9cdd2;"></div>
<div class="a t" style="right:2934px;top:1105.8px;font-size:29px;line-height:29px;color:#535c69;font-weight:400;">3.</div>
<div class="a" style="left:383px;top:1079.5px;width:559px;height:78.0px;border:2px solid #c9cdd2;border-radius:8px;box-sizing:border-box;background:#fff;"></div>
<div class="a t" style="left:408.5px;top:1105.8px;font-size:29px;line-height:29px;color:#333;font-weight:400;letter-spacing:0.09px;">Maglietta</div>
<svg class="a" style="left:890px;top:1102.5px;" width="32" height="32" viewBox="0 0 32 32"><g fill="none" stroke="#a8adb4" stroke-width="3.6" stroke-linecap="butt" stroke-linejoin="miter"><path d="M3 16h23M15 5l11 11-11 11"/></g></svg>
<svg class="a" style="left:1073px;top:1100.5px;" width="36" height="36" viewBox="0 0 36 36"><circle cx="18" cy="18" r="16.5" fill="#fff" stroke="#d2d6db" stroke-width="2"/><path d="M18 10.5v14M11 17.5h14" stroke="#838b95" stroke-width="3"/></svg>
<div class="a" style="left:1166px;top:1079.5px;width:236px;height:78.0px;border:2px solid #c9cdd2;border-radius:8px;box-sizing:border-box;background:#fff;"></div>
<div class="a t" style="right:1960px;top:1105.8px;font-size:29px;line-height:29px;color:#333;font-weight:400;">50,00</div>
<div class="a t" style="right:1925px;top:1105.8px;font-size:29px;line-height:29px;color:#8a9099;font-weight:400;">€</div>
<div class="a" style="left:1466px;top:1079.5px;width:236px;height:78.0px;border:2px solid #c9cdd2;border-radius:8px;box-sizing:border-box;background:#fff;"></div>
<div class="a t" style="right:1681px;top:1105.8px;font-size:29px;line-height:29px;color:#333;font-weight:400;">1</div>
<div class="a t" style="left:1631px;top:1105.8px;font-size:29px;line-height:29px;color:#a8adb4;font-weight:400;">pz.</div>
<div class="a" style="left:1631px;top:1133.5px;width:40px;height:2.0px;background:repeating-linear-gradient(90deg,#c4c9ce 0 5px,transparent 5px 8px);"></div>
<div class="a" style="left:1766px;top:1079.5px;width:536px;height:79.0px;border:2px solid #c9cdd2;border-radius:8px;box-sizing:border-box;background:#fff;"></div>
<div class="a t" style="left:1791.0px;top:1105.8px;font-size:29px;line-height:29px;color:#333;font-weight:400;letter-spacing:-0.19px;">Magazzino Centrale – Milano</div>
<svg class="a" style="left:2246px;top:1099.5px;" width="38" height="38" viewBox="0 0 38 38"><g fill="none" stroke="#535c69" stroke-width="3.2" stroke-linecap="round"><circle cx="15" cy="15" r="10"/><path d="M22.5 22.5l9 9"/></g></svg>
<div class="a t" style="right:634px;top:1090.6px;font-size:29px;line-height:29px;color:#2067b0;font-weight:400;">49 pz.</div>
<div class="a" style="left:2580px;top:1120.5px;width:82px;height:2.0px;background:repeating-linear-gradient(90deg,#2067b0 0 5px,transparent 5px 8px);"></div>
<div class="a" style="left:2726px;top:1079.5px;width:216px;height:79.0px;border:2px solid #c9cdd2;border-radius:8px;box-sizing:border-box;background:#fff;"></div>
<div class="a t" style="right:378px;top:1105.8px;font-size:29px;line-height:29px;color:#333;font-weight:400;">1</div>
<div class="a t" style="left:2864.5px;top:1162.6px;font-size:29px;line-height:29px;color:#2067b0;font-weight:400;letter-spacing:-0.17px;">fino al</div>
<div class="a" style="left:2856px;top:1191.5px;width:86px;height:2.0px;background:repeating-linear-gradient(90deg,#2067b0 0 2px,transparent 2px 4px);"></div>
<div class="a t" style="left:2793.0px;top:1195.1px;font-size:29px;line-height:29px;color:#2067b0;font-weight:400;letter-spacing:0.31px;">15/04/2026</div>
<div class="a" style="left:2793px;top:1224.0px;width:149px;height:2.0px;background:repeating-linear-gradient(90deg,#2067b0 0 2px,transparent 2px 4px);"></div>
<div class="a" style="left:180px;top:862px;width:3032px;height:2px;background:#eef0f2;"></div>
<div class="a" style="left:180px;top:1054px;width:3032px;height:2px;background:#eef0f2;"></div>
<div class="a" style="left:982px;top:612px;width:74px;height:76px;border:2px solid #e3e5e8;border-radius:4px;background:#fff;transform:rotate(6deg);"></div>
<div class="a" style="left:976px;top:616px;width:74px;height:76px;border:2px solid #e3e5e8;border-radius:4px;background:#fff;transform:rotate(3deg);"></div>
<svg class="a" style="left:972px;top:615px;" width="79" height="79" viewBox="0 0 79 79"><defs><linearGradient id="g1" x1="0" y1="0" x2="1" y2="1"><stop offset="0" stop-color="#66706f"/><stop offset=".5" stop-color="#a9afab"/><stop offset="1" stop-color="#c4c6bf"/></linearGradient><clipPath id="c1"><rect x="3" y="3" width="73" height="73" rx="2"/></clipPath></defs><rect x="1" y="1" width="77" height="77" rx="4" fill="#fff" stroke="#d9dcdf" stroke-width="2"/><g clip-path="url(#c1)"><rect x="3" y="3" width="73" height="73" fill="url(#g1)"/><g stroke="#46545a" stroke-width="3" opacity=".5"><path d="M-5 22L22 -5M-5 38L38 -5M52 2L28 30M70 4L48 30"/></g><g stroke="#3e5a60" stroke-width="2.2" opacity=".55"><path d="M8 76L30 44M16 76L36 46M46 76L56 54M52 76L62 56"/></g><path d="M25 26c2-3 5-4 8-3l1 22-7 4-3-6z" fill="#6a342c"/><path d="M54 26c-2-3-5-4-8-3l-1 22 7 4 3-6z" fill="#6a342c"/><g stroke="#2c1815" stroke-width="1.2"><path d="M27 30l5 1M27 34l5 1M27 38l5 1M47 31l5-1M47 35l5-1M47 39l5-1"/></g><path d="M27 24c4-3 8-4 12-4s9 1 13 4" stroke="#c7a07a" stroke-width="2" fill="none"/><path d="M35.5 22h8l-1 22h-6z" fill="#17141a"/><circle cx="39.5" cy="16.5" r="3.2" fill="#c4976a"/><path d="M38 44l-1 20M41.5 44l1 20" stroke="#d2a78b" stroke-width="1.8"/><path d="M35 65h4M41 65h4" stroke="#111" stroke-width="3"/></g></svg>
<svg class="a" style="left:972px;top:893px;" width="78" height="66" viewBox="0 0 78 66"><rect x="1" y="1" width="76" height="64" rx="3" fill="#fff" stroke="#d2d6db" stroke-width="2"/><path d="M8 52c-2-10 8-20 26-28 16-7 30-8 33-2 3 7-8 17-26 26-17 8-31 11-33 4z" fill="#1a1a1a"/><path d="M13 30c0-12 9-19 20-19 11 0 17 7 16 16-6 8-22 11-36 6z" fill="#121212"/><path d="M15 37c9 3 22 1 32-6" stroke="#77776e" stroke-width="1.6" fill="none"/></svg>
<svg class="a" style="left:984px;top:1079px;" width="54" height="77" viewBox="0 0 54 77"><rect x="1" y="1" width="52" height="75" rx="3" fill="#f3f1f0" stroke="#d2d6db" stroke-width="2"/><path d="M15 3h24v10H15z" fill="#5a3b2b"/><path d="M21 4h12v8H21z" fill="#c29a7c"/><path d="M6 16l12-5h18l12 5-2 14-5-1v19H14V29l-5 1z" fill="#121212"/><path d="M9 30l-1 18M45 30l1 18" stroke="#c29a7c" stroke-width="4"/><path d="M14 47h26l3 28H11z" fill="#9dbbe0"/><path d="M27 49v26" stroke="#7a9cc8" stroke-width="1"/></svg>
<div class="a t" style="left:384.0px;top:716.7px;font-size:27px;line-height:27px;color:#a8adb4;font-weight:400;letter-spacing:-0.30px;">Taglie</div>
<div class="a" style="left:384px;top:754px;width:68px;height:63px;border:1px solid #eceef0;border-radius:4px;box-sizing:border-box;background:#fff;"></div>
<div class="a t" style="left:384px;top:754px;width:68px;height:63px;line-height:63px;text-align:center;font-size:26px;color:#535c69;">XS</div>
<div class="a" style="left:463px;top:754px;width:63px;height:63px;border:2px solid #2fc6f6;border-radius:4px;box-sizing:border-box;background:#fff;"></div>
<div class="a t" style="left:463px;top:754px;width:63px;height:63px;line-height:63px;text-align:center;font-size:26px;color:#535c69;">S</div>
<div class="a" style="left:538px;top:754px;width:62px;height:63px;border:1px solid #eceef0;border-radius:4px;box-sizing:border-box;background:#fff;"></div>
<div class="a t" style="left:538px;top:754px;width:62px;height:63px;line-height:63px;text-align:center;font-size:26px;color:#535c69;">M</div>
<div class="a" style="left:612px;top:754px;width:62px;height:63px;border:1px solid #eceef0;border-radius:4px;box-sizing:border-box;background:#fff;"></div>
<div class="a t" style="left:612px;top:754px;width:62px;height:63px;line-height:63px;text-align:center;font-size:26px;color:#535c69;">L</div>
<div class="a" style="left:686px;top:754px;width:67px;height:63px;border:1px solid #eceef0;border-radius:4px;box-sizing:border-box;background:#fff;"></div>
<div class="a t" style="left:686px;top:754px;width:67px;height:63px;line-height:63px;text-align:center;font-size:26px;color:#535c69;">XL</div>
<svg class="a" style="left:508px;top:747px;" width="24" height="24" viewBox="0 0 24 24"><circle cx="12" cy="12" r="11.5" fill="#2fc6f6"/><path d="M7 12.2l3.3 3.3 6.2-6.5" fill="none" stroke="#fff" stroke-width="2.4" stroke-linecap="round" stroke-linejoin="round"/></svg>
<div class="a t" style="left:384.0px;top:1179.7px;font-size:27px;line-height:27px;color:#a8adb4;font-weight:400;letter-spacing:-0.45px;">Taglia</div>
<div class="a" style="left:383px;top:1217px;width:63px;height:63px;border:2px solid #2fc6f6;border-radius:4px;box-sizing:border-box;background:#fff;"></div>
<div class="a t" style="left:383px;top:1217px;width:63px;height:63px;line-height:63px;text-align:center;font-size:26px;color:#535c69;">S</div>
<div class="a" style="left:457px;top:1217px;width:63px;height:63px;border:1px solid #eceef0;border-radius:4px;box-sizing:border-box;background:#fff;"></div>
<div class="a t" style="left:457px;top:1217px;width:63px;height:63px;line-height:63px;text-align:center;font-size:26px;color:#535c69;">M</div>
<div class="a" style="left:531px;top:1217px;width:63px;height:63px;border:1px solid #eceef0;border-radius:4px;box-sizing:border-box;background:#fff;"></div>
<div class="a t" style="left:531px;top:1217px;width:63px;height:63px;line-height:63px;text-align:center;font-size:26px;color:#535c69;">L</div>
<svg class="a" style="left:428px;top:1210px;" width="24" height="24" viewBox="0 0 24 24"><circle cx="12" cy="12" r="11.5" fill="#2fc6f6"/><path d="M7 12.2l3.3 3.3 6.2-6.5" fill="none" stroke="#fff" stroke-width="2.4" stroke-linecap="round" stroke-linejoin="round"/></svg>
<div class="a t" style="left:384.0px;top:1309.7px;font-size:27px;line-height:27px;color:#a8adb4;font-weight:400;letter-spacing:-0.40px;">Colore</div>
<div class="a" style="left:384px;top:1347px;width:168px;height:63px;border:1px solid #eceef0;border-radius:4px;box-sizing:border-box;background:#fff;"></div>
<svg class="a" style="left:397px;top:1358px;" width="42" height="40" viewBox="0 0 42 40"><rect width="42" height="40" fill="#eeeae6"/><path d="M4 2h34l2 6-3 3v18H7V11L3 8z" fill="#f4f4f6"/><path d="M6 12l-2 18M36 12l2 18" stroke="#b07a58" stroke-width="4"/><path d="M7 29h28l1 11H6z" fill="#8fb0d8"/></svg>
<div class="a t" style="left:454px;top:1365.2px;font-size:27px;line-height:27px;color:#535c69;font-weight:400;">Bianco</div>
<div class="a" style="left:563px;top:1347px;width:146px;height:63px;border:1px solid #eceef0;border-radius:4px;box-sizing:border-box;background:#fff;"></div>
<svg class="a" style="left:576px;top:1358px;" width="42" height="40" viewBox="0 0 42 40"><rect width="42" height="40" fill="#eeeae6"/><path d="M4 2h34l2 6-3 3v18H7V11L3 8z" fill="#f2b8cc"/><path d="M6 12l-2 18M36 12l2 18" stroke="#b07a58" stroke-width="4"/><path d="M7 29h28l1 11H6z" fill="#8fb0d8"/></svg>
<div class="a t" style="left:633px;top:1365.2px;font-size:27px;line-height:27px;color:#535c69;font-weight:400;">Rosa</div>
<div class="a" style="left:720px;top:1347px;width:146px;height:63px;border:2px solid #2fc6f6;border-radius:4px;box-sizing:border-box;background:#fff;"></div>
<svg class="a" style="left:733px;top:1358px;" width="42" height="40" viewBox="0 0 42 40"><rect width="42" height="40" fill="#eeeae6"/><path d="M4 2h34l2 6-3 3v18H7V11L3 8z" fill="#111"/><path d="M6 12l-2 18M36 12l2 18" stroke="#b07a58" stroke-width="4"/><path d="M7 29h28l1 11H6z" fill="#8fb0d8"/></svg>
<div class="a t" style="left:790px;top:1365.2px;font-size:27px;line-height:27px;color:#535c69;font-weight:400;">Nero</div>
<svg class="a" style="left:847px;top:1342px;" width="24" height="24" viewBox="0 0 24 24"><circle cx="12" cy="12" r="11.5" fill="#2fc6f6"/><path d="M7 12.2l3.3 3.3 6.2-6.5" fill="none" stroke="#fff" stroke-width="2.4" stroke-linecap="round" stroke-linejoin="round"/></svg>
<div class="a" style="left:384px;top:1426px;width:181px;height:62px;border:1px solid #eceef0;border-radius:4px;box-sizing:border-box;background:#fff;"></div>
<svg class="a" style="left:397px;top:1437px;" width="42" height="40" viewBox="0 0 42 40"><rect width="42" height="40" fill="#eeeae6"/><path d="M4 2h34l2 6-3 3v18H7V11L3 8z" fill="#b9d0ee"/><path d="M6 12l-2 18M36 12l2 18" stroke="#b07a58" stroke-width="4"/><path d="M7 29h28l1 11H6z" fill="#8fb0d8"/></svg>
<div class="a t" style="left:454px;top:1444.2px;font-size:27px;line-height:27px;color:#535c69;font-weight:400;">Azzurro</div>
<div class="a" style="left:3112px;top:896px;width:100px;height:192px;overflow:hidden;"><div style="width:192px;height:192px;border-radius:50%;background:rgba(200,205,210,.55);"></div></div>
<svg class="a" style="left:3156px;top:962px;" width="40" height="60" viewBox="0 0 40 60"><path d="M8 6l22 24L8 54" fill="none" stroke="#fff" stroke-width="7" stroke-linecap="round" stroke-linejoin="round"/></svg>
<div class="a" style="left:3186px;top:502px;width:26px;height:1058px;background:linear-gradient(90deg,rgba(232,236,239,0),rgba(232,236,239,.85));-webkit-mask-image:linear-gradient(180deg,#000 0,#000 960px,transparent 1058px);"></div>
<div class="a t" style="left:2321.0px;top:1584.1px;font-size:29px;line-height:29px;color:#535c69;font-weight:400;letter-spacing:0.02px;">Totale senza sconti e imposte:</div>
<div class="a t" style="right:156px;top:1584.1px;font-size:29px;line-height:29px;color:#535c69;font-weight:400;">130,99</div>
<div class="a t" style="right:129px;top:1584.1px;font-size:29px;line-height:29px;color:#a8adb4;font-weight:400;">€</div>
<div class="a t" style="left:2450.5px;top:1639.1px;font-size:29px;line-height:29px;color:#535c69;font-weight:400;letter-spacing:-0.18px;">Prezzo di consegna:</div>
<div class="a t" style="right:156px;top:1639.1px;font-size:29px;line-height:29px;color:#535c69;font-weight:400;">0</div>
<div class="a t" style="right:129px;top:1639.1px;font-size:29px;line-height:29px;color:#a8adb4;font-weight:400;">€</div>
<div class="a t" style="left:2529.5px;top:1694.1px;font-size:29px;line-height:29px;color:#7c9a1a;font-weight:400;letter-spacing:0.12px;">Totale sconto:</div>
<div class="a t" style="right:156px;top:1694.1px;font-size:29px;line-height:29px;color:#7c9a1a;font-weight:400;">0</div>
<div class="a t" style="right:129px;top:1694.1px;font-size:29px;line-height:29px;color:#a8adb4;font-weight:400;">€</div>
<div class="a t" style="left:2450.5px;top:1749.1px;font-size:29px;line-height:29px;color:#535c69;font-weight:400;">Totale ante imposte:</div>
<div class="a t" style="right:156px;top:1749.1px;font-size:29px;line-height:29px;color:#535c69;font-weight:400;">130,99</div>
<div class="a t" style="right:129px;top:1749.1px;font-size:29px;line-height:29px;color:#a8adb4;font-weight:400;">€</div>
<div class="a t" style="left:2514.5px;top:1804.1px;font-size:29px;line-height:29px;color:#535c69;font-weight:400;letter-spacing:0.04px;">Totale imposte:</div>
<div class="a t" style="right:156px;top:1804.1px;font-size:29px;line-height:29px;color:#535c69;font-weight:400;">0</div>
<div class="a t" style="right:129px;top:1804.1px;font-size:29px;line-height:29px;color:#a8adb4;font-weight:400;">€</div>
</body></html>
